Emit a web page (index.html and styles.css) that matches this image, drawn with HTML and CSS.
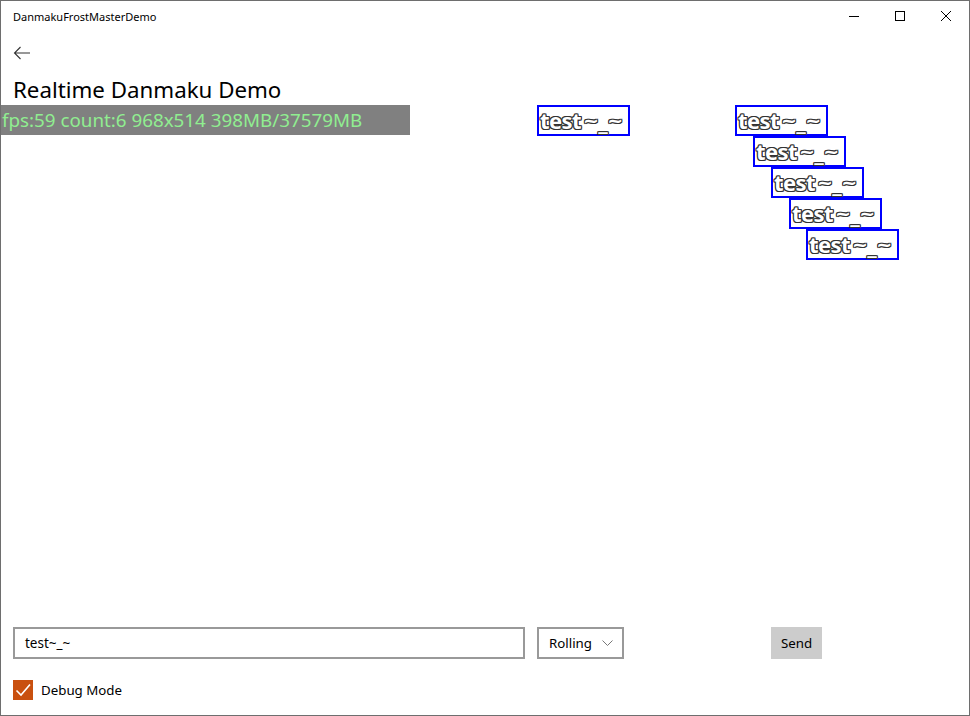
FILE: index.html
```html
<!DOCTYPE html>
<html>
<head>
<meta charset="utf-8">
<link rel="stylesheet" href="styles.css">
</head>
<body>
<div class="window">
  <div class="titlebar">
    <div class="title">DanmakuFrostMasterDemo</div>
    <div class="caption-buttons">
      <div class="cap-btn"><svg width="12" height="12" viewBox="0 0 12 12"><path d="M1 6.5H11" stroke="#000" stroke-width="1"/></svg></div>
      <div class="cap-btn"><svg width="12" height="12" viewBox="0 0 12 12"><rect x="1.5" y="1.5" width="9" height="9" fill="none" stroke="#000" stroke-width="1"/></svg></div>
      <div class="cap-btn"><svg width="12" height="12" viewBox="0 0 12 12"><path d="M1 1L11 11M11 1L1 11" stroke="#000" stroke-width="1"/></svg></div>
    </div>
  </div>
  <div class="page">
    <div class="back">
      <svg width="18" height="14" viewBox="0 0 18 14"><path d="M17 7H1.5M7.5 1L1.5 7L7.5 13" fill="none" stroke="#333" stroke-width="1.1"/></svg>
    </div>
    <h1 class="heading">Realtime Danmaku Demo</h1>
    <div class="stage">
      <div class="fps">fps:59 count:6 968x514 398MB/37579MB</div>
      <div class="danmaku" style="left:536px;top:0px">test<span class="tail"><span class="tl">~</span>_<span class="tl">~</span></span></div>
      <div class="danmaku" style="left:734px;top:0px">test<span class="tail"><span class="tl">~</span>_<span class="tl">~</span></span></div>
      <div class="danmaku" style="left:752px;top:31px">test<span class="tail"><span class="tl">~</span>_<span class="tl">~</span></span></div>
      <div class="danmaku" style="left:770px;top:62px">test<span class="tail"><span class="tl">~</span>_<span class="tl">~</span></span></div>
      <div class="danmaku" style="left:788px;top:93px">test<span class="tail"><span class="tl">~</span>_<span class="tl">~</span></span></div>
      <div class="danmaku" style="left:805px;top:124px">test<span class="tail"><span class="tl">~</span>_<span class="tl">~</span></span></div>
    </div>
    <div class="controls">
      <div class="textbox">test~_~</div>
      <div class="combo"><span>Rolling</span><svg width="11" height="6" viewBox="0 0 11 6"><path d="M0.5 0.5L5.5 5.5L10.5 0.5" fill="none" stroke="#777" stroke-width="1"/></svg></div>
      <div class="send">Send</div>
    </div>
    <div class="debug">
      <div class="checkbox"><svg width="20" height="20" viewBox="0 0 20 20"><path d="M3.5 10.5L8 15L17 4.5" fill="none" stroke="#fff" stroke-width="1.6"/></svg></div>
      <span>Debug Mode</span>
    </div>
  </div>
</div>
</body>
</html>
```
FILE: styles.css
```css
* { box-sizing: border-box; }
html, body { margin: 0; padding: 0; background: #fff; }
body { font-family: "Noto Sans", "Open Sans", sans-serif; color: #000; }
.window {
  width: 970px; height: 716px;
  border: 1px solid #6e6e6e;
  display: flex; flex-direction: column;
  overflow: hidden;
}
.titlebar {
  height: 31px;
  display: flex; align-items: center; justify-content: space-between;
}
.title { font-size: 11px; padding-left: 12px; }
.caption-buttons { display: flex; height: 100%; }
.cap-btn { width: 46px; height: 100%; display: flex; align-items: center; justify-content: center; padding-bottom: 2px; }
.page { flex: 1; display: flex; flex-direction: column; }
.back { height: 42px; padding-left: 12px; display: flex; align-items: center; }
.heading {
  margin: 0; padding-left: 12px;
  font-size: 22.3px; font-weight: normal; line-height: 31px; height: 31px;
}
.stage { position: relative; height: 514px; }
.fps {
  position: absolute; left: 0; top: 0;
  width: 409px; height: 30px;
  background: #808080; color: #90ee90;
  font-size: 18.8px; line-height: 30px; padding-left: 1px;
  white-space: nowrap;
}
.danmaku {
  position: absolute;
  width: 93px; height: 31px;
  border: 2px solid #0000ff;
  color: #fff;
  font-size: 22px; font-weight: bold; line-height: 26px;
  padding-left: 1px;
  letter-spacing: -0.6px;
  white-space: nowrap;
  text-shadow: 1px 0 #333, -1px 0 #333, 0 1px #333, 0 -1px #333, 1px 1px #333, -1px -1px #333, 1px -1px #333, -1px 1px #333;
}
.tail { font-family: "DejaVu Sans", sans-serif; letter-spacing: -0.5px; font-size: 19px; padding-left: 2px; }
.tl { vertical-align: 2px; }
.controls {
  margin-top: 8px; height: 32px;
  display: flex; padding-left: 12px;
}
.textbox {
  width: 512px; height: 32px;
  border: 2px solid #999;
  font-size: 13.5px; line-height: 28px; padding-left: 10px;
}
.combo {
  margin-left: 12px; width: 87px; height: 32px;
  border: 2px solid #999;
  font-size: 13.3px; display: flex; align-items: center; padding-left: 10px; gap: 10px;
}
.send {
  margin-left: 147px; width: 51px; height: 32px;
  background: #cccccc;
  font-size: 13.3px; display: flex; align-items: center; justify-content: center;
}
.debug {
  margin-top: 21px; padding-left: 12px;
  display: flex; align-items: center; gap: 8px;
  font-size: 13.3px;
}
.checkbox { width: 20px; height: 20px; background: #c9500f; }
```
